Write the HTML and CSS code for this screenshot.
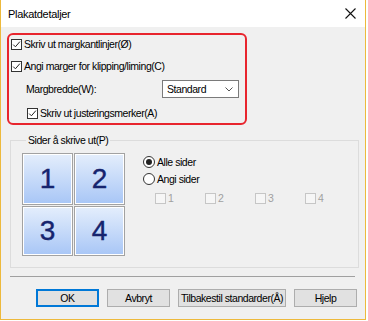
FILE: index.html
```html
<!DOCTYPE html>
<html>
<head>
<meta charset="utf-8">
<link rel="stylesheet" href="styles.css">
</head>
<body>
<div class="window">
  <div class="titlebar">
    <span class="title">Plakatdetaljer</span>
    <svg class="close" width="11" height="11" viewBox="0 0 11 11"><path d="M0.5 0.5L10.5 10.5M10.5 0.5L0.5 10.5" stroke="#111" stroke-width="1.1" fill="none"/></svg>
  </div>
  <div class="content">
    <div class="highlight">
      <label class="row r1">
        <svg class="cb" width="11" height="11" viewBox="0 0 11 11"><rect x="0.5" y="0.5" width="10" height="10" fill="#fff" stroke="#333"/><path d="M2.2 5.6L4.4 7.8L8.9 2.6" stroke="#222" stroke-width="1" fill="none"/></svg>
        <span>Skriv ut margkantlinjer(Ø)</span>
      </label>
      <label class="row r2">
        <svg class="cb" width="11" height="11" viewBox="0 0 11 11"><rect x="0.5" y="0.5" width="10" height="10" fill="#fff" stroke="#333"/><path d="M2.2 5.6L4.4 7.8L8.9 2.6" stroke="#222" stroke-width="1" fill="none"/></svg>
        <span>Angi marger for klipping/liming(C)</span>
      </label>
      <div class="row r3">
        <span class="mlabel">Margbredde(W):</span>
        <div class="select">
          <span>Standard</span>
          <svg width="8" height="5" viewBox="0 0 8 5"><path d="M0.5 0.5L4 4L7.5 0.5" stroke="#555" stroke-width="1" fill="none"/></svg>
        </div>
      </div>
      <label class="row r4">
        <svg class="cb" width="11" height="11" viewBox="0 0 11 11"><rect x="0.5" y="0.5" width="10" height="10" fill="#fff" stroke="#333"/><path d="M2.2 5.6L4.4 7.8L8.9 2.6" stroke="#222" stroke-width="1" fill="none"/></svg>
        <span>Skriv ut justeringsmerker(A)</span>
      </label>
    </div>

    <fieldset class="group">
      <legend>Sider å skrive ut(P)</legend>
      <div class="group-body">
        <div class="tiles">
          <div class="tile">1</div>
          <div class="tile">2</div>
          <div class="tile">3</div>
          <div class="tile">4</div>
        </div>
        <div class="options">
          <label class="radio-row">
            <svg width="12" height="12" viewBox="0 0 12 12"><circle cx="6" cy="6" r="5.5" fill="#fff" stroke="#333"/><circle cx="6" cy="6" r="3" fill="#222"/></svg>
            <span>Alle sider</span>
          </label>
          <label class="radio-row">
            <svg width="12" height="12" viewBox="0 0 12 12"><circle cx="6" cy="6" r="5.5" fill="#fff" stroke="#333"/></svg>
            <span>Angi sider</span>
          </label>
          <div class="pages">
            <label class="page"><span class="dcb"></span><span>1</span></label>
            <label class="page"><span class="dcb"></span><span>2</span></label>
            <label class="page"><span class="dcb"></span><span>3</span></label>
            <label class="page"><span class="dcb"></span><span>4</span></label>
          </div>
        </div>
      </div>
    </fieldset>

    <div class="sep"></div>

    <div class="buttons">
      <button class="btn default">OK</button>
      <button class="btn">Avbryt</button>
      <button class="btn wide">Tilbakestil standarder(Å)</button>
      <button class="btn">Hjelp</button>
    </div>
  </div>
</div>
</body>
</html>
```

FILE: styles.css
```css
* { box-sizing: border-box; }
html, body { margin: 0; padding: 0; background: #ffffff; }
body {
  font-family: "Liberation Sans", Arial, sans-serif;
  font-size: 10.5px;
  letter-spacing: -0.45px;
  color: #000;
}
.window {
  width: 366px;
  height: 320px;
  border: 1px solid #edb93c;
  border-top: none;
  background: #f0f0f0;
  display: flex;
  flex-direction: column;
}
.titlebar {
  height: 27px;
  flex: none;
  background: #fff;
  display: flex;
  align-items: center;
  justify-content: space-between;
  padding: 0 9px 0 7px;
}
.title { font-size: 11px; letter-spacing: -0.3px; color: #000; }
.content {
  flex: 1;
  padding: 6px 0 0 6px;
  display: flex;
  flex-direction: column;
}
.highlight {
  width: 240px;
  height: 92px;
  flex: none;
  border: 2px solid #e8252e;
  border-radius: 6px;
  padding: 0 0 0 2px;
  display: flex;
  flex-direction: column;
}
.row {
  display: flex;
  align-items: center;
  gap: 2px;
  flex: none;
}
.r1 { height: 18px; }
.r2 { height: 22px; margin-top: 2px; }
.r3 {
  height: 20px;
  margin-top: 2px;
  padding-left: 15px;
  justify-content: space-between;
  padding-right: 6px;
}
.r4 { height: 18px; margin-top: 5px; padding-left: 16px; }
.cb { flex: none; }
.select {
  width: 77px;
  height: 18px;
  background: #fff;
  border: 1px solid #7a7a7a;
  display: flex;
  align-items: center;
  justify-content: space-between;
  padding: 0 5px 0 4px;
}
.group {
  margin: 9px 0 0 3px;
  width: 349px;
  height: 134px;
  flex: none;
  border: 1px solid #dcdcdc;
  padding: 0 0 0 11px;
}
.group legend {
  padding: 0 2px;
  margin-left: 4px;
}
.group-body {
  display: flex;
  gap: 18px;
  padding-top: 7px;
}
.tiles {
  display: grid;
  grid-template-columns: 51px 51px;
  grid-template-rows: 52px 50px;
  gap: 1px;
}
.tile {
  border: 1px solid #a2a2a2;
  box-shadow: inset 0 0 0 1px #fff;
  background: linear-gradient(#e4eefc, #a8c6f6);
  display: flex;
  align-items: center;
  justify-content: center;
  color: #16246e;
  font-size: 28px;
  letter-spacing: 0;
  -webkit-text-stroke: 0.4px #16246e;
}
.options {
  display: flex;
  flex-direction: column;
}
.radio-row {
  display: flex;
  align-items: center;
  gap: 2px;
  height: 17px;
}
.pages {
  display: flex;
  padding-left: 12px;
  margin-top: 2px;
}
.page {
  display: flex;
  align-items: center;
  gap: 2px;
  width: 50px;
  color: #a0a0a0;
  height: 18px;
}
.dcb {
  width: 11px;
  height: 11px;
  border: 1px solid #c6c6c6;
  background: #f6f6f6;
}
.sep {
  margin: 8px 0 0 3px;
  width: 345px;
  height: 1px;
  flex: none;
  background: #a0a0a0;
}
.buttons {
  display: flex;
  gap: 8px;
  margin: 12px 0 0 29px;
}
.btn {
  font-family: "Liberation Sans", Arial, sans-serif;
  font-size: 10.5px;
  letter-spacing: -0.45px;
  white-space: nowrap;
  color: #000;
  width: 63px;
  height: 18px;
  padding: 0;
  background: #e1e1e1;
  border: 1px solid #adadad;
}
.btn.wide { width: 108px; }
.btn.default { border: 2px solid #0078d7; }
```
